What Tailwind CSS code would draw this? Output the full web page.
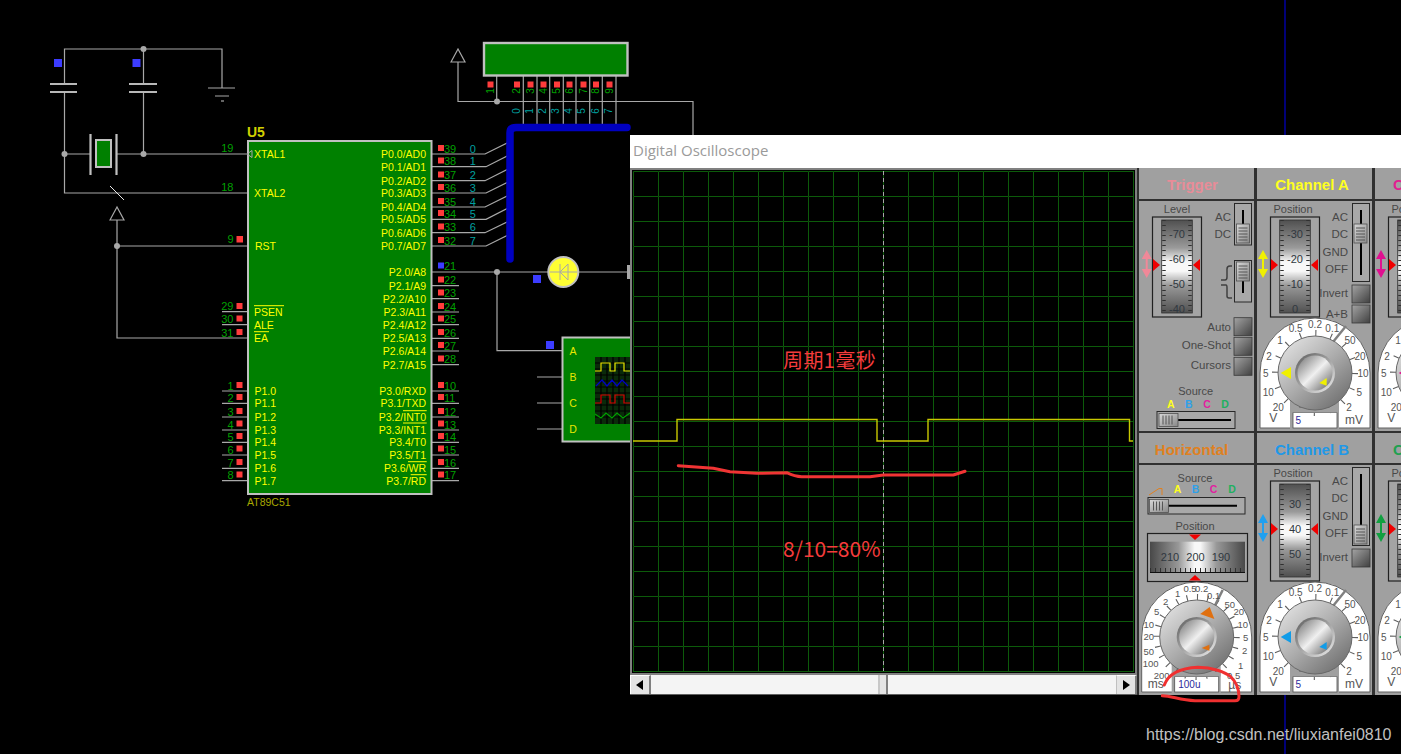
<!DOCTYPE html>
<html>
<head>
<meta charset="utf-8">
<script src="https://cdn.jsdelivr.net/npm/@tailwindcss/browser@4"></script>
</head>
<body class="bg-black">
<svg width="0" height="0" class="absolute">
  <defs>
    <linearGradient id="tapeV" x1="0" y1="0" x2="0" y2="1"><stop offset="0" stop-color="#505050"/><stop offset=".3" stop-color="#9a9a9a"/><stop offset=".45" stop-color="#f8f8f8"/><stop offset=".55" stop-color="#f8f8f8"/><stop offset=".7" stop-color="#9a9a9a"/><stop offset="1" stop-color="#505050"/></linearGradient>
    <linearGradient id="tapeH" x1="0" y1="0" x2="1" y2="0"><stop offset="0" stop-color="#484848"/><stop offset=".3" stop-color="#989898"/><stop offset=".47" stop-color="#f8f8f8"/><stop offset=".53" stop-color="#f8f8f8"/><stop offset=".7" stop-color="#989898"/><stop offset="1" stop-color="#484848"/></linearGradient>
    <linearGradient id="knob" x1="0.15" y1="0.1" x2="0.85" y2="0.9"><stop offset="0" stop-color="#dcdcdc"/><stop offset=".5" stop-color="#ababab"/><stop offset="1" stop-color="#747474"/></linearGradient>
    <linearGradient id="ring" x1="0.15" y1="0.1" x2="0.85" y2="0.9"><stop offset="0" stop-color="#6c6c6c"/><stop offset="1" stop-color="#dcdcdc"/></linearGradient>
    <linearGradient id="metal" x1="0.15" y1="0.15" x2="0.85" y2="0.85"><stop offset="0" stop-color="#969696"/><stop offset=".5" stop-color="#f0f0f0"/><stop offset="1" stop-color="#868686"/></linearGradient>
    <linearGradient id="btn" x1="0" y1="0" x2="1" y2="1"><stop offset="0" stop-color="#a4a4a4"/><stop offset="1" stop-color="#404040"/></linearGradient>
    <linearGradient id="thumb" x1="0" y1="0" x2="1" y2="1"><stop offset="0" stop-color="#d8d8d8"/><stop offset="1" stop-color="#888888"/></linearGradient>
    <pattern id="scopegrid" x="0" y="0" width="25" height="25" patternUnits="userSpaceOnUse"><path d="M.5 25V.5H25" fill="none" stroke="#0c5a0a" stroke-width="1"/></pattern>

    <g id="tape">
      <rect x="13.5" y="16" width="49" height="100" fill="#a4a4a4" stroke="#202020" stroke-width="1.2"/>
      <rect x="22.7" y="19" width="30.6" height="93" fill="url(#tapeV)" stroke="#303030" stroke-width=".8"/>
      <line x1="25" y1="19" x2="25" y2="112" stroke="#303030" stroke-width="3.5" stroke-dasharray="1 4"/>
      <line x1="51" y1="19" x2="51" y2="112" stroke="#303030" stroke-width="3.5" stroke-dasharray="1 4"/>
      <polygon points="14,58 21,64 14,70" fill="#f00000"/>
      <polygon points="61,58 54,64 61,70" fill="#f00000"/>
    </g>

    <g id="thumbV">
      <rect width="13" height="19" fill="url(#thumb)" stroke="#505050" stroke-width=".8"/>
      <path d="M2 4H11M2 7H11M2 10H11M2 13H11M2 16H11" stroke="#555" stroke-width="1"/>
    </g>
    <g id="thumbH">
      <rect width="19" height="13" fill="url(#thumb)" stroke="#505050" stroke-width=".8"/>
      <path d="M4 2V11M7 2V11M10 2V11M13 2V11" stroke="#555" stroke-width="1"/>
    </g>
    <g id="pbtn">
      <rect width="18" height="18" fill="url(#btn)" stroke="#383838" stroke-width=".8"/>
    </g>

    <g id="dialbase">
      <path d="M-55 55V0A55 55 0 0 1 55 0V55Z" fill="#ffffff" stroke="#606060" stroke-width="1"/>
      <rect x="-25" y="26" width="49" height="30" fill="#a0a0a0"/>
      <rect x="-22" y="39.5" width="44" height="15.5" fill="#ffffff" stroke="#505050" stroke-width=".8"/>
    </g>
    <g id="knobtop">
      <circle r="37" fill="url(#knob)" stroke="#686868" stroke-width="1"/>
      <circle r="20" fill="url(#ring)"/>
      <circle r="17.5" fill="url(#metal)"/>
    </g>

    <g id="vdial" font-size="10" fill="#555555" text-anchor="middle">
      <use href="#dialbase"/>
      <circle r="40" fill="none" stroke="#606060" stroke-width="6" stroke-dasharray="1.1 14.61"/>
      <line x1="18" y1="-31" x2="31" y2="-47" stroke="#808080" stroke-width="2.5"/>
      <rect x="-25" y="35" width="49" height="4.5" fill="#a0a0a0"/>
      <use href="#knobtop"/>
      <text x="-19.3" y="-41.5">0.5</text><text x="0" y="-44.8">0.2</text><text x="17.3" y="-41.5">0.1</text>
      <text x="35" y="-29.5">50</text><text x="45" y="-13.2">20</text><text x="48" y="3.5">10</text>
      <text x="44.3" y="22.5">5</text><text x="34" y="37.8">2</text><text x="-36.7" y="37.8">20</text>
      <text x="-46.7" y="22.5">10</text><text x="-49.3" y="3.5">5</text><text x="-46" y="-13.2">2</text><text x="-35" y="-29.5">1</text>
      <text x="-41.7" y="49" font-size="12">V</text><text x="39" y="51" font-size="12">mV</text>
      <text x="-19.5" y="51" text-anchor="start" fill="#2c2c9c">5</text>
    </g>

    <g id="hdial" font-size="9.5" fill="#555555" text-anchor="middle">
      <use href="#dialbase"/>
      <circle r="40" fill="none" stroke="#606060" stroke-width="6" stroke-dasharray="1.1 9.37"/>
      <line x1="18" y1="-31" x2="26" y2="-47" stroke="#808080" stroke-width="2.5"/>
      <rect x="-25" y="35" width="49" height="4.5" fill="#a0a0a0"/>
      <use href="#knobtop"/>
      <text x="-6.7" y="-45.5">0.5</text><text x="5" y="-45.5">0.2</text><text x="17" y="-38.5">0.1</text>
      <text x="-19" y="-40.5">1</text><text x="-31" y="-32.5">2</text><text x="-40" y="-22.5">5</text>
      <text x="-48" y="-9.5">10</text><text x="-48" y="2.5">20</text><text x="-48" y="17.5">50</text>
      <text x="-46" y="29.5">100</text><text x="-35" y="41.5">200</text><text x="-41" y="51" font-size="12">ms</text>
      <text x="33" y="-29.5">50</text><text x="42" y="-22.5">20</text><text x="46" y="-9.5">10</text>
      <text x="49" y="3.5">5</text><text x="48" y="16.5">2</text><text x="44" y="31.5">1</text><text x="37" y="41.5">0.5</text>
      <text x="38" y="52" font-size="12">µs</text>
      <text x="-18.5" y="51" text-anchor="start" fill="#2c2c9c" font-size="10">100u</text>
    </g>
  </defs>
</svg>

<div class="relative w-[1401px] h-[754px] overflow-hidden bg-black [font-family:'Liberation_Sans',sans-serif]">

  <!-- schematic canvas -->
  <svg class="absolute left-0 top-0" width="1401" height="754" viewBox="0 0 1401 754">
    <line x1="1285" y1="0" x2="1285" y2="754" stroke="#0000c8" stroke-width="1.2"/>

    <g fill="none" stroke="#a8a8a8" stroke-width="1.2">
      <path d="M64.5 84V49H222V88"/>
      <path d="M143.5 49V84"/>
      <path d="M64.5 92V193H247"/>
      <path d="M143.5 92V154"/>
      <path d="M64.5 154H90M116 154H247"/>
      <path d="M208 88H235M215 96H229"/>
      <path d="M117 220V338H247M117 246H247"/>
      <path d="M110 220L117 207L124 220Z"/>
      <path d="M458 62V101.5H693V135M451 62L458 49L465 62Z"/>
      <path d="M496.7 76V101.5M523.3 76V127M537 76V127M549.7 76V127M563.3 76V127M576 76V127M589.7 76V127M602.3 76V127M616 76V127"/>
      <path d="M432 154H485L510 141.5M432 166.7H486L510 154.5M432 180.7H485L510 168M432 193H486L510 181M432 207H485L510 194.5M432 219.3H486L510 207M432 232.7H485L510 220.5M432 246H486L510 234"/>
      <path d="M432 272H628M497 272V350.7H562"/>
      <path d="M432 285.7H459M432 298.7H459M432 312H459M432 324.7H459M432 338.3H459M432 351H459M432 364.7H459"/>
      <path d="M432 391H459M432 403.3H459M432 417H459M432 430H459M432 442.3H459M432 455H459M432 468.3H459M432 480.7H459"/>
      <path d="M222 311.7H247M222 324.7H247M222 391H247M222 403.3H247M222 417H247M222 430H247M222 442.3H247M222 455H247M222 468.3H247M222 480.7H247"/>
      <path d="M537 377H562M537 403H562M537 429H562"/>
    </g>
    <path d="M221 101H224" stroke="#a8a8a8" stroke-width="1.2"/>
    <path d="M110 186L124 200" stroke="#e8e8e8" stroke-width="1"/>
    <path d="M50 84H77M50 92H77M129 84H157M129 92H157" stroke="#b8b8b8" stroke-width="2"/>
    <path d="M90.5 134V175M116.5 134V175" stroke="#c0c0c0" stroke-width="2.2"/>
    <rect x="96" y="140" width="15" height="27" fill="#008000" stroke="#c0c0c0" stroke-width="2"/>
    <g fill="#a8a8a8">
      <circle cx="143.5" cy="49" r="3"/><circle cx="64.5" cy="154" r="3"/><circle cx="143.5" cy="154" r="3"/>
      <circle cx="117" cy="246" r="3"/><circle cx="497" cy="101.5" r="3"/><circle cx="497" cy="272" r="3"/>
    </g>
    <g fill="#3c3cff">
      <rect x="54" y="59" width="8" height="8"/><rect x="132.5" y="59" width="8" height="8"/>
      <rect x="533" y="275" width="8" height="8"/><rect x="546" y="341" width="8" height="8"/>
      <rect x="438" y="262.5" width="6" height="6"/>
    </g>

    <!-- LCD header -->
    <rect x="484" y="43" width="143.5" height="32.5" fill="#008000" stroke="#c0c0c0" stroke-width="2.4"/>

    <!-- bus -->
    <path d="M627 127.5H516Q510 127.5 510 133V259" fill="none" stroke="#0000c0" stroke-width="7.5" stroke-linecap="round"/>

    <!-- chip -->
    <rect x="248" y="141" width="183.5" height="353" fill="#008000" stroke="#c0c0c0" stroke-width="2"/>
    <path d="M247 154L252 150.5V157.5Z" fill="none" stroke="#a8a8a8" stroke-width="1"/>
    <text x="247" y="137" font-size="14" font-weight="bold" fill="#d0d000">U5</text>
    <text x="247" y="506" font-size="10.5" fill="#a8a800">AT89C51</text>

    <g font-size="10.5" fill="#ffff00">
      <text x="254" y="158">XTAL1</text><text x="254" y="197">XTAL2</text><text x="255" y="250">RST</text>
      <text x="254" y="315.5">PSEN</text><text x="254" y="329">ALE</text><text x="254" y="342">EA</text>
      <text x="254.5" y="395">P1.0</text><text x="254.5" y="407">P1.1</text><text x="254.5" y="421">P1.2</text><text x="254.5" y="434">P1.3</text><text x="254.5" y="446">P1.4</text><text x="254.5" y="459">P1.5</text><text x="254.5" y="472">P1.6</text><text x="254.5" y="484.5">P1.7</text>
    </g>
    <g font-size="10.5" fill="#ffff00" text-anchor="end">
      <text x="426" y="158">P0.0/AD0</text><text x="426" y="170.5">P0.1/AD1</text><text x="426" y="184.5">P0.2/AD2</text><text x="426" y="197">P0.3/AD3</text><text x="426" y="211">P0.4/AD4</text><text x="426" y="223">P0.5/AD5</text><text x="426" y="236.5">P0.6/AD6</text><text x="426" y="250">P0.7/AD7</text>
      <text x="426" y="276">P2.0/A8</text><text x="426" y="289.5">P2.1/A9</text><text x="426" y="302.5">P2.2/A10</text><text x="426" y="316">P2.3/A11</text><text x="426" y="328.5">P2.4/A12</text><text x="426" y="342">P2.5/A13</text><text x="426" y="355">P2.6/A14</text><text x="426" y="368.5">P2.7/A15</text>
      <text x="426" y="395">P3.0/RXD</text><text x="426" y="407">P3.1/TXD</text><text x="426" y="421">P3.2/INT0</text><text x="426" y="434">P3.3/INT1</text><text x="426" y="446">P3.4/T0</text><text x="426" y="459">P3.5/T1</text><text x="426" y="472">P3.6/WR</text><text x="426" y="484.5">P3.7/RD</text>
    </g>
    <path d="M254 305.7H284M254 331.7H269M403 410.7H426.7M403 423H426.7M408 461.7H426.7M410.7 474.7H426.7" stroke="#ffff00" stroke-width="1"/>

    <!-- pin numbers -->
    <g font-size="11" fill="#00a000">
      <text x="444" y="152.5">39</text><text x="444" y="165">38</text><text x="444" y="179">37</text><text x="444" y="191.5">36</text><text x="444" y="205.5">35</text><text x="444" y="217.5">34</text><text x="444" y="231">33</text><text x="444" y="244.5">32</text>
      <text x="444" y="270">21</text><text x="444" y="284">22</text><text x="444" y="297">23</text><text x="444" y="310.5">24</text><text x="444" y="323">25</text><text x="444" y="336.5">26</text><text x="444" y="349.5">27</text><text x="444" y="363">28</text>
      <text x="444" y="389.5">10</text><text x="444" y="401.5">11</text><text x="444" y="415.5">12</text><text x="444" y="428.5">13</text><text x="444" y="440.5">14</text><text x="444" y="453.5">15</text><text x="444" y="466.5">16</text><text x="444" y="479">17</text>
    </g>
    <g font-size="11" fill="#00a000" text-anchor="end">
      <text x="233.5" y="152">19</text><text x="233.5" y="191">18</text><text x="233.5" y="243">9</text>
      <text x="233.5" y="310">29</text><text x="233.5" y="323">30</text><text x="233.5" y="336.5">31</text>
      <text x="233.5" y="389.5">1</text><text x="233.5" y="401.5">2</text><text x="233.5" y="415.5">3</text><text x="233.5" y="428.5">4</text><text x="233.5" y="440.5">5</text><text x="233.5" y="453.5">6</text><text x="233.5" y="466.5">7</text><text x="233.5" y="479">8</text>
    </g>
    <g font-size="11" fill="#00a0a0" text-anchor="middle">
      <text x="472.7" y="152.5">0</text><text x="472.7" y="165">1</text><text x="472.7" y="179">2</text><text x="472.7" y="191.5">3</text><text x="472.7" y="205.5">4</text><text x="472.7" y="217.5">5</text><text x="472.7" y="231">6</text><text x="472.7" y="244.5">7</text>
    </g>
    <g font-size="10" fill="#00a000" text-anchor="middle">
      <text transform="translate(493.5 91) rotate(-90)">1</text><text transform="translate(520 91) rotate(-90)">2</text><text transform="translate(533.5 91) rotate(-90)">3</text><text transform="translate(546.5 91) rotate(-90)">4</text><text transform="translate(560 91) rotate(-90)">5</text><text transform="translate(572.5 91) rotate(-90)">6</text><text transform="translate(586.5 91) rotate(-90)">7</text><text transform="translate(599 91) rotate(-90)">8</text><text transform="translate(612.5 91) rotate(-90)">9</text>
    </g>
    <g font-size="10" fill="#00a0a0" text-anchor="middle">
      <text transform="translate(519.5 111) rotate(-90)">0</text><text transform="translate(532.5 111) rotate(-90)">1</text><text transform="translate(545.5 111) rotate(-90)">2</text><text transform="translate(558.5 111) rotate(-90)">3</text><text transform="translate(572 111) rotate(-90)">4</text><text transform="translate(585 111) rotate(-90)">5</text><text transform="translate(598.5 111) rotate(-90)">6</text><text transform="translate(611.5 111) rotate(-90)">7</text>
    </g>

    <!-- red test squares -->
    <g fill="#ff3c3c">
      <rect x="236.5" y="236" width="6.5" height="6.5"/>
      <rect x="487.5" y="81.5" width="6" height="6"/><rect x="514" y="81.5" width="6" height="6"/><rect x="527.5" y="81.5" width="6" height="6"/><rect x="540.5" y="81.5" width="6" height="6"/><rect x="554" y="81.5" width="6" height="6"/><rect x="566.5" y="81.5" width="6" height="6"/><rect x="580.5" y="81.5" width="6" height="6"/><rect x="593" y="81.5" width="6" height="6"/><rect x="606.5" y="81.5" width="6" height="6"/>
      <rect x="438" y="145" width="6" height="6"/><rect x="438" y="157.5" width="6" height="6"/><rect x="438" y="171.5" width="6" height="6"/><rect x="438" y="184" width="6" height="6"/><rect x="438" y="198" width="6" height="6"/><rect x="438" y="210" width="6" height="6"/><rect x="438" y="223.5" width="6" height="6"/><rect x="438" y="237" width="6" height="6"/>
      <rect x="438" y="276.5" width="6" height="6"/><rect x="438" y="289.5" width="6" height="6"/><rect x="438" y="303" width="6" height="6"/><rect x="438" y="315.5" width="6" height="6"/><rect x="438" y="329" width="6" height="6"/><rect x="438" y="342" width="6" height="6"/><rect x="438" y="355.5" width="6" height="6"/>
      <rect x="438" y="382" width="6" height="6"/><rect x="438" y="394" width="6" height="6"/><rect x="438" y="408" width="6" height="6"/><rect x="438" y="420.5" width="6" height="6"/><rect x="438" y="433" width="6" height="6"/><rect x="438" y="445.5" width="6" height="6"/><rect x="438" y="459" width="6" height="6"/><rect x="438" y="471.5" width="6" height="6"/>
      <rect x="236.5" y="303" width="6" height="6"/><rect x="236.5" y="315.5" width="6" height="6"/><rect x="236.5" y="329" width="6" height="6"/>
      <rect x="236.5" y="382" width="6" height="6"/><rect x="236.5" y="394" width="6" height="6"/><rect x="236.5" y="408" width="6" height="6"/><rect x="236.5" y="420.5" width="6" height="6"/><rect x="236.5" y="433" width="6" height="6"/><rect x="236.5" y="445.5" width="6" height="6"/><rect x="236.5" y="459" width="6" height="6"/><rect x="236.5" y="471.5" width="6" height="6"/>
    </g>

    <!-- LED -->
    <circle cx="563.3" cy="272" r="15" fill="#ffff33" stroke="#c0c0c0" stroke-width="2"/>
    <path d="M550 272H577M560 264V280M560 272L568 264V280Z" fill="none" stroke="#a8a8a8" stroke-width="1"/>
    <rect x="627" y="265" width="3" height="14" fill="#a8a8a8"/>

    <!-- virtual instrument -->
    <rect x="562.5" y="337.5" width="70" height="104" fill="#008000" stroke="#c0c0c0" stroke-width="2"/>
    <g font-size="10.5" fill="#e8e800" text-anchor="middle">
      <text x="573" y="354.5">A</text><text x="573" y="381">B</text><text x="573" y="407">C</text><text x="573" y="433">D</text>
    </g>
    <rect x="595" y="357" width="36" height="67" fill="#0a2a0a"/>
    <path d="M601 357V424M607 357V424M613 357V424M619 357V424M625 357V424M595 363H631M595 369H631M595 375H631M595 381H631M595 387H631M595 393H631M595 399H631M595 405H631M595 411H631M595 417H631" stroke="#000" stroke-width="1.2"/>
    <path d="M595 371H601V363H610V371H615V363H624V371H631" fill="none" stroke="#e8e800" stroke-width="1.2"/>
    <path d="M596 386L602 380L607 386L612 380L617 386L622 380L628 386" fill="none" stroke="#0000c8" stroke-width="1.2"/>
    <path d="M595 403H601V395H610V403H615V395H624V403H631" fill="none" stroke="#d80000" stroke-width="1.2"/>
    <path d="M595 414L601 418L606 413L612 418L617 413L623 418L630 413" fill="none" stroke="#00a000" stroke-width="1.2"/>
  </svg>

  <!-- oscilloscope window -->
  <div class="absolute left-[630px] top-[135px] w-[771px] h-[560px] bg-[#303030] flex flex-col overflow-hidden">
    <div class="h-[33px] shrink-0 bg-white flex items-center pl-[3px] pb-[2px] text-[15px] text-[#9a9a9a] [font-family:'Open_Sans',sans-serif]">Digital Oscilloscope</div>
    <div class="flex flex-1">
      <div class="w-[507px] shrink-0 flex flex-col">
        <div class="h-[507px] border-[2.5px] border-[#808080] bg-black pl-[0.5px] pt-[0.5px]">
          <svg width="502" height="502" viewBox="0 0 502 502" class="block">
            <rect x="0" y="0" width="500" height="500" fill="url(#scopegrid)"/>
            <path d="M0 500.5H501M500.5 0V501" stroke="#0c5a0a"/>
            <line x1="250.5" y1="0" x2="250.5" y2="500" stroke="#a8a8a8" stroke-dasharray="4 3"/>
            <path d="M-1 270H44V248.5H244V270H295V248.5H496.5V270H500" fill="none" stroke="#c8c800" stroke-width="1.4"/>
          </svg>
        </div>
        <div class="h-[20px] flex bg-[#f4f4f4] border-b border-[#606060]">
          <div class="w-[21px] bg-[#e4e4e4] border-r-2 border-r-[#808080] border-l border-l-white border-t border-t-white flex items-center justify-center"><svg width="8" height="10"><polygon points="7,0 0,5 7,10" fill="#000"/></svg></div>
          <div class="w-[227px]"></div>
          <div class="w-[10px] bg-[#e4e4e4] border-x-2 border-r-[#808080] border-l-[#c8c8c8]"></div>
          <div class="flex-1"></div>
          <div class="w-[21px] bg-[#e4e4e4] border-r-2 border-r-[#808080] border-l border-l-[#c0c0c0] border-t border-t-white flex items-center justify-center"><svg width="8" height="10"><polygon points="1,0 8,5 1,10" fill="#000"/></svg></div>
        </div>
      </div>

      <div class="ml-[2px] grid grid-cols-[115px_115px_115px] gap-x-[3px] gap-y-[2px] content-start">
        <!-- Trigger -->
        <div class="flex flex-col">
          <div class="h-[31px] bg-[#a0a0a0] flex items-center justify-center font-bold text-[15px] text-[#e88c98] border-b-2 border-[#303030] box-content -mb-[2px]"><span class="pt-[4px] pr-[8px]">Trigger</span></div>
          <svg width="115" height="230" viewBox="0 0 115 230" class="block bg-[#a0a0a0] mt-[2px]" font-size="11" fill="#484848">
            <text x="38" y="12" text-anchor="middle">Level</text>
            <use href="#tape"/>
            <g text-anchor="middle" font-size="11" fill="#303840"><text x="38" y="37">-70</text><text x="38" y="62">-60</text><text x="38" y="87">-50</text><text x="38" y="112">-40</text></g>
            <polygon points="7.7,49 2.7,58 6.7,58 6.7,68 2.7,68 7.7,77 12.7,68 8.7,68 8.7,58 12.7,58" fill="#f08898"/>
            <g text-anchor="end" font-size="11.5"><text x="92" y="20">AC</text><text x="92" y="37">DC</text><text x="92" y="129.5">Auto</text><text x="92" y="148">One-Shot</text><text x="92" y="168">Cursors</text></g>
            <rect x="95.5" y="2.5" width="17" height="41.5" fill="#a8a8a8" stroke="#282828" stroke-width="1"/>
            <line x1="104" y1="9" x2="104" y2="38" stroke="#000" stroke-width="2"/>
            <use href="#thumbV" x="97.5" y="23"/>
            <rect x="95.5" y="59.5" width="17" height="41.5" fill="#a8a8a8" stroke="#282828" stroke-width="1"/>
            <line x1="104" y1="65" x2="104" y2="92" stroke="#000" stroke-width="2"/>
            <use href="#thumbV" x="97.5" y="61"/>
            <path d="M82 79H86Q88 79 88 76V68Q88 65 91 65H93M82 84H87Q88 84 88 87V95Q88 97 90 97H93" fill="none" stroke="#404040" stroke-width="1.5"/>
            <use href="#pbtn" x="95" y="116.7"/><use href="#pbtn" x="95" y="136.3"/><use href="#pbtn" x="95" y="156.3"/>
            <text x="56.7" y="193.5" text-anchor="middle">Source</text>
            <g text-anchor="middle" font-size="10.5" font-weight="bold"><text x="31.7" y="207" fill="#ffff20">A</text><text x="49.7" y="207" fill="#30a0e8">B</text><text x="68" y="207" fill="#e020a0">C</text><text x="86" y="207" fill="#20b060">D</text></g>
            <rect x="18" y="210.5" width="78" height="17" fill="#a8a8a8" stroke="#282828" stroke-width="1"/>
            <line x1="24" y1="219" x2="92" y2="219" stroke="#000" stroke-width="2"/>
            <use href="#thumbH" x="20" y="212.5"/>
          </svg>
        </div>
        <!-- Channel A -->
        <div class="flex flex-col">
          <div class="h-[31px] bg-[#a0a0a0] flex items-center justify-center font-bold text-[15px] text-[#ffff20] border-b-2 border-[#303030] box-content -mb-[2px]"><span class="pt-[4px] pr-[5px]">Channel A</span></div>
          <svg width="115" height="230" viewBox="0 0 115 230" class="block bg-[#a0a0a0] mt-[2px]" font-size="11" fill="#484848">
            <text x="36" y="12" text-anchor="middle">Position</text>
            <use href="#tape"/>
            <g text-anchor="middle" font-size="11" fill="#303840"><text x="38" y="37">-30</text><text x="38" y="62">-20</text><text x="38" y="87">-10</text><text x="38" y="112">0</text></g>
            <polygon points="6,49 1,58 5,58 5,68 1,68 6,77 11,68 7,68 7,58 11,58" fill="#f0f000"/>
            <g text-anchor="end" font-size="11.5"><text x="91" y="20">AC</text><text x="91" y="37">DC</text><text x="91" y="55">GND</text><text x="91" y="72">OFF</text><text x="91" y="96">Invert</text><text x="91" y="117">A+B</text></g>
            <rect x="95.5" y="2.5" width="17" height="78" fill="#a8a8a8" stroke="#282828" stroke-width="1"/>
            <line x1="104" y1="9" x2="104" y2="74" stroke="#000" stroke-width="2"/>
            <use href="#thumbV" x="97" y="23"/>
            <use href="#pbtn" x="95" y="84"/><use href="#pbtn" x="95" y="104"/>
            <use href="#vdial" x="58" y="172"/>
            <g transform="translate(58 172)" fill="#f0f000"><polygon points="-34.3,0 -24,-6 -24,6"/><polygon points="4.3,10 11.7,5 11.7,12.7"/></g>
          </svg>
        </div>
        <!-- Channel C -->
        <div class="flex flex-col">
          <div class="h-[31px] bg-[#a0a0a0] flex items-center justify-center font-bold text-[15px] text-[#e02090] border-b-2 border-[#303030] box-content -mb-[2px]"><span class="pt-[4px] pr-[5px]">Channel C</span></div>
          <svg width="115" height="230" viewBox="0 0 115 230" class="block bg-[#a0a0a0] mt-[2px]" font-size="11" fill="#484848">
            <text x="36" y="12" text-anchor="middle">Position</text>
            <use href="#tape"/>
            <polygon points="6,49 1,58 5,58 5,68 1,68 6,77 11,68 7,68 7,58 11,58" fill="#e01090"/>
            <use href="#vdial" x="58" y="172"/>
            <g transform="translate(58 172)" fill="#e01090"><polygon points="-34.3,0 -24,-6 -24,6"/></g>
          </svg>
        </div>
        <!-- Horizontal -->
        <div class="flex flex-col">
          <div class="h-[30px] bg-[#a0a0a0] flex items-center justify-center font-bold text-[15px] text-[#e08020] border-b-2 border-[#303030] box-content -mb-[2px]"><span class="pt-[4px] pr-[10px]">Horizontal</span></div>
          <svg width="115" height="230" viewBox="0 0 115 230" class="block bg-[#a0a0a0] mt-[2px]" font-size="11" fill="#484848">
            <text x="56" y="17" text-anchor="middle">Source</text>
            <path d="M10 30L20 23.5H23V30" fill="none" stroke="#e08020" stroke-width="1"/>
            <g text-anchor="middle" font-size="10.5" font-weight="bold"><text x="38.5" y="28" fill="#ffff20">A</text><text x="56.5" y="28" fill="#30a0e8">B</text><text x="74.5" y="28" fill="#e020a0">C</text><text x="93" y="28" fill="#20b060">D</text></g>
            <rect x="9" y="32.5" width="97" height="16.5" fill="#a8a8a8" stroke="#282828" stroke-width="1"/>
            <line x1="14" y1="40.7" x2="98" y2="40.7" stroke="#000" stroke-width="2"/>
            <use href="#thumbH" x="10.5" y="34.5"/>
            <text x="56" y="64.5" text-anchor="middle">Position</text>
            <rect x="8.5" y="68.5" width="100" height="48" fill="#a4a4a4" stroke="#202020" stroke-width="1.2"/>
            <rect x="11" y="76.7" width="95" height="31" fill="url(#tapeH)"/>
            <line x1="11" y1="105" x2="106" y2="105" stroke="#303030" stroke-width="4" stroke-dasharray="1 4"/>
            <line x1="11" y1="107.5" x2="106" y2="107.5" stroke="#101010" stroke-width="1.2"/>
            <polygon points="50,69.5 62,69.5 56,75" fill="#f00000"/><polygon points="50,115.5 62,115.5 56,110" fill="#f00000"/>
            <g text-anchor="middle" font-size="11" fill="#303840"><text x="31" y="95.5">210</text><text x="56.5" y="95.5">200</text><text x="82" y="95.5">190</text></g>
            <use href="#hdial" x="57.7" y="172"/>
            <g transform="translate(57.7 172)" fill="#e07010"><polygon points="13,-30 3.5,-23 17.7,-18"/><polygon points="5,11 12.7,7.7 12.7,13.7"/></g>
          </svg>
        </div>
        <!-- Channel B -->
        <div class="flex flex-col">
          <div class="h-[30px] bg-[#a0a0a0] flex items-center justify-center font-bold text-[15px] text-[#2098e8] border-b-2 border-[#303030] box-content -mb-[2px]"><span class="pt-[4px] pr-[5px]">Channel B</span></div>
          <svg width="115" height="230" viewBox="0 0 115 230" class="block bg-[#a0a0a0] mt-[2px]" font-size="11" fill="#484848">
            <text x="36" y="12" text-anchor="middle">Position</text>
            <use href="#tape"/>
            <g text-anchor="middle" font-size="11" fill="#303840"><text x="38" y="43">30</text><text x="38" y="68">40</text><text x="38" y="93">50</text></g>
            <polygon points="6,49 1,58 5,58 5,68 1,68 6,77 11,68 7,68 7,58 11,58" fill="#20a0f0"/>
            <g text-anchor="end" font-size="11.5"><text x="91" y="20">AC</text><text x="91" y="37">DC</text><text x="91" y="55">GND</text><text x="91" y="72">OFF</text><text x="91" y="96">Invert</text></g>
            <rect x="95.5" y="2.5" width="17" height="78" fill="#a8a8a8" stroke="#282828" stroke-width="1"/>
            <line x1="104" y1="9" x2="104" y2="74" stroke="#000" stroke-width="2"/>
            <use href="#thumbV" x="97" y="60"/>
            <use href="#pbtn" x="95" y="84"/>
            <use href="#vdial" x="58" y="172"/>
            <g transform="translate(58 172)" fill="#109ce8"><polygon points="-34.3,0 -24,-6 -24,6"/><polygon points="4.3,10 11.7,5 11.7,12.7"/></g>
          </svg>
        </div>
        <!-- Channel D -->
        <div class="flex flex-col">
          <div class="h-[30px] bg-[#a0a0a0] flex items-center justify-center font-bold text-[15px] text-[#20a050] border-b-2 border-[#303030] box-content -mb-[2px]"><span class="pt-[4px] pr-[5px]">Channel D</span></div>
          <svg width="115" height="230" viewBox="0 0 115 230" class="block bg-[#a0a0a0] mt-[2px]" font-size="11" fill="#484848">
            <text x="36" y="12" text-anchor="middle">Position</text>
            <use href="#tape"/>
            <polygon points="6,49 1,58 5,58 5,68 1,68 6,77 11,68 7,68 7,58 11,58" fill="#10a040"/>
            <use href="#vdial" x="58" y="172"/>
            <g transform="translate(58 172)" fill="#10a040"><polygon points="-34.3,0 -24,-6 -24,6"/></g>
          </svg>
        </div>
      </div>
    </div>
  </div>

  <!-- hand annotations -->
  <svg class="absolute left-0 top-0 pointer-events-none" width="1401" height="754" viewBox="0 0 1401 754">
    <path d="M678.3 465.7L713.3 468.3L730 471.7L756.7 473.3L786.7 472.7Q795 476.7 801.7 476.7H870L883.3 475H953.3L965 471.3" fill="none" stroke="#f03434" stroke-width="3" stroke-linecap="round" stroke-linejoin="round"/>
    <path d="M1164.3 685C1168 675 1178 668.3 1198 667.3C1212 667.5 1225 671.7 1231 677C1237 683 1239 690 1239 696.7C1239 700 1237 700.7 1235 700.7H1195C1180 700 1172 696 1162.3 695.7" fill="none" stroke="#f03030" stroke-width="3" stroke-linecap="round"/>
    <text x="783" y="368" font-size="20" letter-spacing=".4" fill="#f53c3c" class="[font-family:'Noto_Sans_CJK_SC',sans-serif]">周期1毫秒</text>
    <text x="783" y="557" font-size="21" fill="#f53c3c" class="[font-family:'Noto_Sans_CJK_SC',sans-serif]">8/10=80%</text>
  </svg>

  <span class="absolute left-[1146px] top-[725px] text-[16px] leading-[20px] text-[#c0c0c0] whitespace-nowrap">https://blog.csdn.net/liuxianfei0810</span>
</div>
</body>
</html>
